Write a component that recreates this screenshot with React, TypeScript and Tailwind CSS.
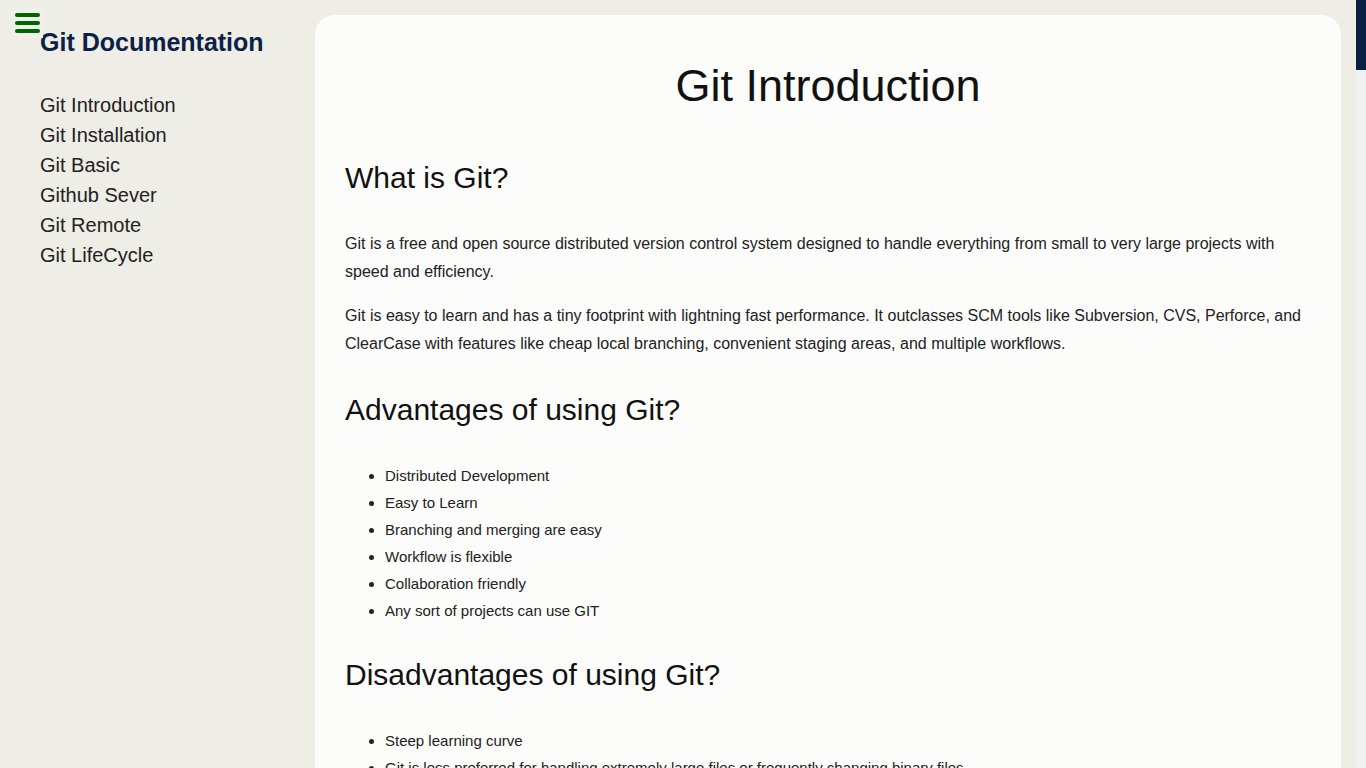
import { useState } from 'react';

const menu = [
  'Git Introduction',
  'Git Installation',
  'Git Basic',
  'Github Sever',
  'Git Remote',
  'Git LifeCycle',
];

const ventagens = [
  'Distributed Development',
  'Easy to Learn',
  'Branching and merging are easy',
  'Workflow is flexible',
  'Collaboration friendly',
  'Any sort of projects can use GIT',
];

const desvantagens = [
  'Steep learning curve',
  'Git is less preferred for handling extremely large files or frequently changing binary files.',
  'Does not support checking out sub-trees',
  'Windows support is weaker than on Linux',
];

function App() {
  const [aberto, setAberto] = useState(true);

  return (
    <div className="h-screen flex overflow-hidden bg-[#eeede6] font-['Liberation_Sans',Arial,sans-serif]">
      <div className="flex-1 flex min-w-0 relative">
        {/* botão do menu por cima da barra lateral */}
        <button
          type="button"
          onClick={() => setAberto(!aberto)}
          className="absolute left-[12px] top-[8px] px-[3px] py-[5px] bg-[#f0f0ea] flex flex-col gap-1"
        >
          <span className="block w-[25px] h-1 rounded-full bg-[#006400]" />
          <span className="block w-[25px] h-1 rounded-full bg-[#006400]" />
          <span className="block w-[25px] h-1 rounded-full bg-[#006400]" />
        </button>

        <aside className="w-[315px] shrink-0 pl-[40px]">
          <h2 className="mt-[27px] text-[25px] leading-[30px] font-bold text-[#0c2148]">
            Git Documentation
          </h2>
          {aberto && (
            <nav className="mt-[33px] flex flex-col">
              {menu.map((item) => (
                <a key={item} href="#" className="text-[20px] leading-[30px] text-[#222]">
                  {item}
                </a>
              ))}
            </nav>
          )}
        </aside>

        <main className="flex-1 min-w-0 pt-[15px] pr-[15px]">
          <div className="bg-[#fcfcfa] rounded-[20px] px-[30px] pt-[45px] pb-10 text-[#111]">
            <h1 className="text-center text-[45px] leading-[52px] mb-[48px]">Git Introduction</h1>

            <h2 className="text-[30px] leading-[36px] mt-[34px] mb-[34px]">What is Git?</h2>
            <p className="text-[16px] leading-[28px] mb-4 text-[#222]">
              Git is a free and open source distributed version control system designed to handle everything from small to very large projects with speed and efficiency.
            </p>
            <p className="text-[16px] leading-[28px] mb-4 text-[#222]">
              Git is easy to learn and has a tiny footprint with lightning fast performance. It outclasses SCM tools like Subversion, CVS, Perforce, and ClearCase with features like cheap local branching, convenient staging areas, and multiple workflows.
            </p>

            <h2 className="text-[30px] leading-[36px] mt-[34px] mb-[34px]">Advantages of using Git?</h2>
            <ul className="list-disc pl-[40px] text-[15px] leading-[27px] text-[#222]">
              {ventagens.map((v) => (
                <li key={v}>{v}</li>
              ))}
            </ul>

            <h2 className="text-[30px] leading-[36px] mt-[33px] mb-[34px]">Disadvantages of using Git?</h2>
            <ul className="list-disc pl-[40px] text-[15px] leading-[27px] text-[#222]">
              {desvantagens.map((v) => (
                <li key={v}>{v}</li>
              ))}
            </ul>
          </div>
        </main>
      </div>

      {/* barra de rolagem */}
      <div className="w-[10px] shrink-0 flex flex-col bg-[#f1f1f1]">
        <div className="h-[70px] bg-[#0b1f45]" />
      </div>
    </div>
  );
}

export default App;
